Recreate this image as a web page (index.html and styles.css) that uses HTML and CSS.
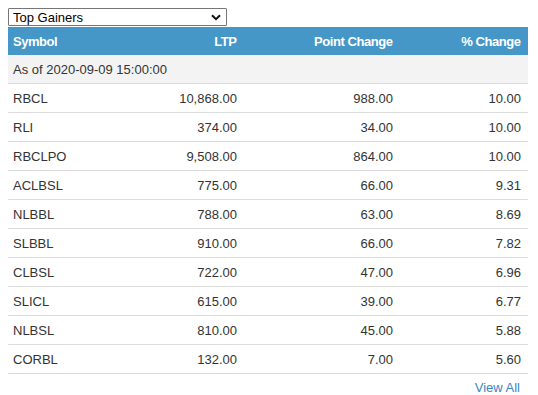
FILE: index.html
```html
<!DOCTYPE html>
<html>
<head>
<meta charset="utf-8">
<link rel="stylesheet" href="styles.css">
</head>
<body>
<div class="wrap">
  <div class="select">
    <span>Top Gainers</span>
    <svg class="chev" width="10" height="7" viewBox="0 0 10 7"><path d="M1 1.2 L5 5.2 L9 1.2" fill="none" stroke="#111" stroke-width="2"/></svg>
  </div>
  <div class="table">
    <div class="row head">
      <div class="c l">Symbol</div><div class="c">LTP</div><div class="c">Point Change</div><div class="c">% Change</div>
    </div>
    <div class="row date"><div class="c l full">As of 2020-09-09 15:00:00</div></div>
    <div class="row"><div class="c l">RBCL</div><div class="c">10,868.00</div><div class="c">988.00</div><div class="c">10.00</div></div>
    <div class="row"><div class="c l">RLI</div><div class="c">374.00</div><div class="c">34.00</div><div class="c">10.00</div></div>
    <div class="row"><div class="c l">RBCLPO</div><div class="c">9,508.00</div><div class="c">864.00</div><div class="c">10.00</div></div>
    <div class="row"><div class="c l">ACLBSL</div><div class="c">775.00</div><div class="c">66.00</div><div class="c">9.31</div></div>
    <div class="row"><div class="c l">NLBBL</div><div class="c">788.00</div><div class="c">63.00</div><div class="c">8.69</div></div>
    <div class="row"><div class="c l">SLBBL</div><div class="c">910.00</div><div class="c">66.00</div><div class="c">7.82</div></div>
    <div class="row"><div class="c l">CLBSL</div><div class="c">722.00</div><div class="c">47.00</div><div class="c">6.96</div></div>
    <div class="row"><div class="c l">SLICL</div><div class="c">615.00</div><div class="c">39.00</div><div class="c">6.77</div></div>
    <div class="row"><div class="c l">NLBSL</div><div class="c">810.00</div><div class="c">45.00</div><div class="c">5.88</div></div>
    <div class="row"><div class="c l">CORBL</div><div class="c">132.00</div><div class="c">7.00</div><div class="c">5.60</div></div>
  </div>
  <div class="foot"><a class="viewall">View All</a></div>
</div>
</body>
</html>
```
FILE: styles.css
```css
html, body { margin: 0; padding: 0; background: #fff; }
body { font-family: "Liberation Sans", Arial, sans-serif; font-size: 13px; color: #333; }
.wrap { padding: 8px; width: 520px; }
.select {
  box-sizing: border-box;
  width: 219px; height: 18px;
  border: 1px solid #767676; border-radius: 1px;
  display: flex; align-items: center; justify-content: space-between;
  padding: 0 5px 0 4px;
  color: #000; font-size: 13px;
}
.chev { display: block; }
.table { display: flex; flex-direction: column; }
.row {
  display: grid;
  grid-template-columns: 118px 118px 156px 128px;
  height: 29px; box-sizing: border-box;
  border-bottom: 1px solid #dcdcdc;
  align-items: center;
}
.row.head { height: 28px; background: #4597c7; color: #fff; font-weight: bold; font-size: 13px; letter-spacing: -0.45px; border-bottom: none; margin-top: 1px; }
.row.date { background: #f3f3f3; }
.c { text-align: right; padding: 0 7px 0 5px; white-space: nowrap; }
.head .c { padding-right: 7.5px; }
.c.l { text-align: left; }
.c.full { grid-column: 1 / 5; }
.foot { display: flex; justify-content: flex-end; padding: 6px 8px 0 0; }
.viewall { color: #3a86c3; text-decoration: none; }
```
